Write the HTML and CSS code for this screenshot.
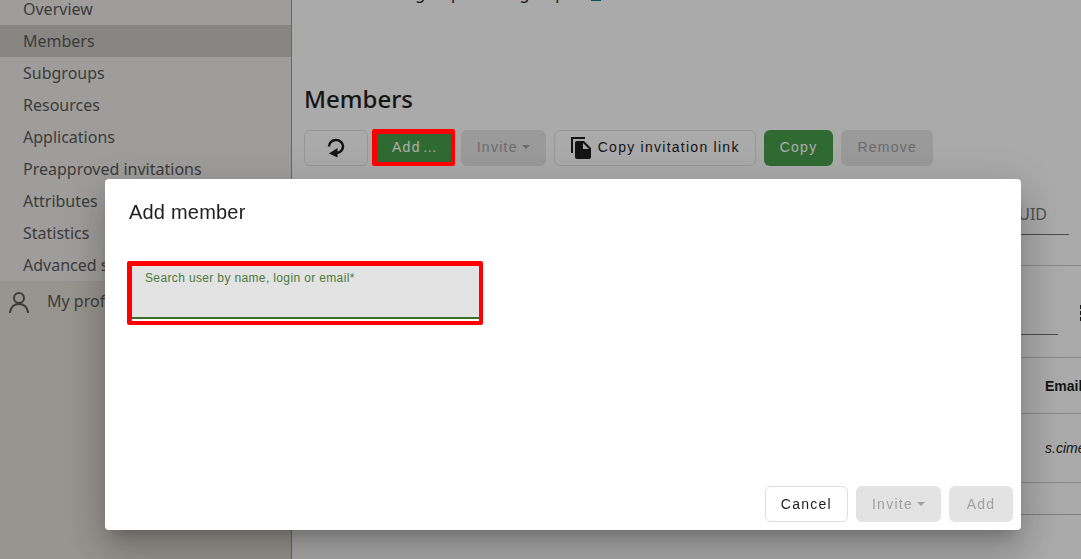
FILE: index.html
```html
<!DOCTYPE html>
<html lang="en">

<head>
    <meta charset="UTF-8">
    <meta name="viewport" content="width=device-width, initial-scale=1">
    <title>Members</title>
    <link rel="stylesheet" href="styles.css">
</head>

<body>
    <div class="page">
        <nav class="sidebar">
            <div class="menu">
                <a href="#">Overview</a>
                <a href="#" class="active">Members</a>
                <a href="#">Subgroups</a>
                <a href="#">Resources</a>
                <a href="#">Applications</a>
                <a href="#">Preapproved invitations</a>
                <a href="#">Attributes</a>
                <a href="#">Statistics</a>
                <a href="#">Advanced settings</a>
            </div>
            <a href="#" class="profile">
                <svg width="20" height="26" viewBox="0 -4 20 26" fill="none" stroke="currentColor" stroke-width="2">
                    <circle cx="10" cy="6" r="5" />
                    <path d="M1 21v-1c1-5 4-8 9-8s8 3 9 8v1" />
                </svg>
                My profile
            </a>
        </nav>

        <main class="content">
            <p class="description">Short name of group and its group <a href="#" aria-label="Edit"><svg width="10" height="12" viewBox="0 0 10 12" fill="currentColor"><path d="M0 10h10v2H0zM1 7l5-6 2 2-5 5H1z" /></svg></a></p>
            <h1>Members</h1>
            <div class="toolbar">
                <button class="btn outlined" aria-label="Refresh">
                    <svg width="20" height="20" viewBox="0 0 20 20">
                        <path d="M3 8.500A7 6.500 0 1 1 10.500 15" fill="none" stroke="currentColor" stroke-width="2.500" />
                        <path d="M3 15.500L11.500 10v9.500z" fill="currentColor" />
                    </svg>
                </button>
                <div class="marked">
                    <button class="btn green">Add<span class="dots">…</span></button>
                    <span class="mark mark-button"></span>
                </div>
                <button class="btn" disabled>Invite<span class="caret"></span></button>
                <button class="btn outlined with-icon">
                    <svg width="22" height="24" viewBox="0 0 22 24" fill="currentColor">
                        <path d="M1 1h14v2H3v14H1z" />
                        <path d="M7 5h7l7 7v9a2 2 0 0 1-2 2H7a2 2 0 0 1-2-2V7a2 2 0 0 1 2-2zm6 2v6h6z" fill-rule="evenodd" />
                    </svg>
                    Copy invitation link
                </button>
                <button class="btn green">Copy</button>
                <button class="btn" disabled>Remove</button>
            </div>

            <input class="filter" type="text" placeholder="Filter by name, login, email or UUID" aria-label="Filter members">

            <section class="members">
                <div class="table-search">
                    <input type="text" aria-label="Search in table">
                    <button class="more" aria-label="More">
                        <svg width="4" height="16" viewBox="0 0 4 16" fill="currentColor">
                            <path d="M0 0h4v4H0zM0 6h4v4H0zM0 12h4v4H0z" />
                        </svg>
                    </button>
                </div>
                <table>
                    <thead>
                        <tr>
                            <th class="name">Name</th>
                            <th>Email</th>
                        </tr>
                    </thead>
                    <tbody>
                        <tr>
                            <td class="name"></td>
                            <td class="email">s.cimet</td>
                        </tr>
                    </tbody>
                </table>
                <div class="table-footer"></div>
            </section>
        </main>
    </div>

    <div class="backdrop">
        <div class="dialog" role="dialog" aria-labelledby="dialog-title">
            <h2 id="dialog-title">Add member</h2>
            <div class="dialog-body">
                <div class="marked search">
                    <label for="search">Search user by name, login or email*</label>
                    <input type="text" id="search">
                    <span class="mark mark-field"></span>
                </div>
            </div>
            <div class="actions">
                <button class="btn outlined">Cancel</button>
                <button class="btn" disabled>Invite<span class="caret"></span></button>
                <button class="btn" disabled>Add</button>
            </div>
        </div>
    </div>
</body>

</html>
```
FILE: styles.css
```css
* {
    box-sizing: border-box;
}

body {
    margin: 0;
    height: 100vh;
    overflow: hidden;
    background: #fbfbfb;
    color: #212121;
    font-family: "Noto Sans", sans-serif;
    font-size: 16px;
}

.page {
    display: flex;
    min-height: 100vh;
}

/* sidebar */
.sidebar {
    flex: 0 0 292px;
    background: #e0dbd3;
    border-right: 1px solid #999;
}

.sidebar a {
    display: flex;
    align-items: center;
    color: #595959;
    text-decoration: none;
}

.menu {
    margin-top: -7px;
    background: #eae8e5;
}

.menu a {
    height: 32px;
    padding-left: 23px;
}

.menu .active {
    background: #c9c6c2;
}

.sidebar .profile {
    height: 40px;
    padding-left: 9px;
    gap: 18px;
}

/* main page */
.content {
    flex: 1;
    min-width: 0;
    padding: 0 12px;
    overflow: hidden;
}

.description {
    display: flex;
    align-items: center;
    gap: 26px;
    margin: -19px 0 0;
    line-height: 24px;
}

.description a {
    display: flex;
    padding-top: 4px;
    color: #0a7c8c;
}

.content h1 {
    margin: 78px 0 15px;
    font-size: 24px;
    line-height: 32px;
    font-weight: 500;
}

.toolbar,
.actions {
    display: flex;
    gap: 8px;
}

.btn {
    display: flex;
    align-items: center;
    justify-content: center;
    flex: none;
    min-width: 64px;
    height: 36px;
    padding: 0 15px;
    border: 1px solid transparent;
    border-radius: 6px;
    background: none;
    color: #1d1d1d;
    font-family: "Liberation Sans", sans-serif;
    font-size: 14px;
    letter-spacing: 0.09em;
    white-space: nowrap;
}

.toolbar .btn {
    padding-bottom: 2px;
}

.toolbar svg {
    margin-top: 2px;
}

.btn.outlined {
    border-color: #dedede;
}

.btn.green {
    background: #479d4a;
    color: #fff;
}

.btn:disabled {
    background: #e3e3e3;
    border-color: #e3e3e3;
    color: #a0a0a0;
}

.with-icon {
    gap: 6px;
}

.dots {
    letter-spacing: 0;
    padding-left: 2px;
}

.caret {
    margin-left: 4px;
    border: 4px solid transparent;
    border-top-color: currentColor;
    border-bottom: 0;
}

.filter,
.table-search input {
    border: 0;
    border-bottom: 1px solid #6e6e6e;
    background: none;
    font: inherit;
    outline: none;
}

.filter {
    display: block;
    width: 100%;
    height: 45px;
    margin-top: 24px;
    padding: 4px 22px 0 0;
    text-align: right;
}

.filter::placeholder {
    color: #757575;
}

.members {
    width: 1000px;
    margin-top: 30px;
    border-top: 1px solid #cbcbcb;
}

.table-search {
    display: flex;
    align-items: center;
    height: 91px;
}

.table-search input {
    width: 754px;
    height: 46px;
}

.more {
    margin: 6px 0 0 22px;
    padding: 0;
    border: 0;
    background: none;
    color: #212121;
}

table {
    width: 100%;
    border-collapse: collapse;
    border-top: 1px solid #cbcbcb;
    font-family: "Liberation Sans", sans-serif;
    font-size: 14px;
    text-align: left;
}

th,
td {
    height: 56px;
    padding: 0;
    border-bottom: 1px solid #cbcbcb;
}

td {
    height: 69px;
}

.name {
    width: 741px;
}

.email {
    font-style: italic;
}

.table-footer {
    height: 32px;
    border-bottom: 1px solid #bbb;
}

/* dialog */
.backdrop {
    position: fixed;
    inset: 0;
    display: flex;
    align-items: flex-start;
    padding: 179px 60px 0 105px;
    background: rgba(0, 0, 0, 0.32);
}

.dialog {
    flex: 1;
    background: #fff;
    border-radius: 4px;
    font-family: "Liberation Sans", sans-serif;
    box-shadow: 0 11px 15px -7px rgba(0, 0, 0, 0.2), 0 24px 38px 3px rgba(0, 0, 0, 0.14), 0 9px 46px 8px rgba(0, 0, 0, 0.12);
}

.dialog h2 {
    margin: 0;
    padding: 17px 24px 0;
    font-size: 20px;
    line-height: 32px;
    font-weight: 400;
    letter-spacing: 0.01em;
}

.dialog-body {
    min-height: 250px;
    padding: 34px 24px 0;
}

.actions {
    justify-content: flex-end;
    padding: 8px;
}

.search {
    width: 352px;
    height: 57px;
    padding: 8px 16px 0;
    background: #e3e3e3;
    border-bottom: 2px solid #38702a;
}

.search label {
    display: block;
    color: #4c7a3c;
    font-size: 12px;
    line-height: 16px;
    letter-spacing: 0.03em;
}

.search input {
    width: 100%;
    padding: 0;
    border: 0;
    background: none;
    font-size: 16px;
    outline: none;
}

/* red highlight frames */
.marked {
    position: relative;
}

.mark {
    position: absolute;
    z-index: 2;
    border: solid #f00;
    border-width: 5px 4px 4px 5px;
    border-radius: 2px;
    pointer-events: none;
}

.mark-button {
    inset: -1px -2px 0 -4px;
}

.mark-field {
    inset: -1px -2px -8px -2px;
}
```
